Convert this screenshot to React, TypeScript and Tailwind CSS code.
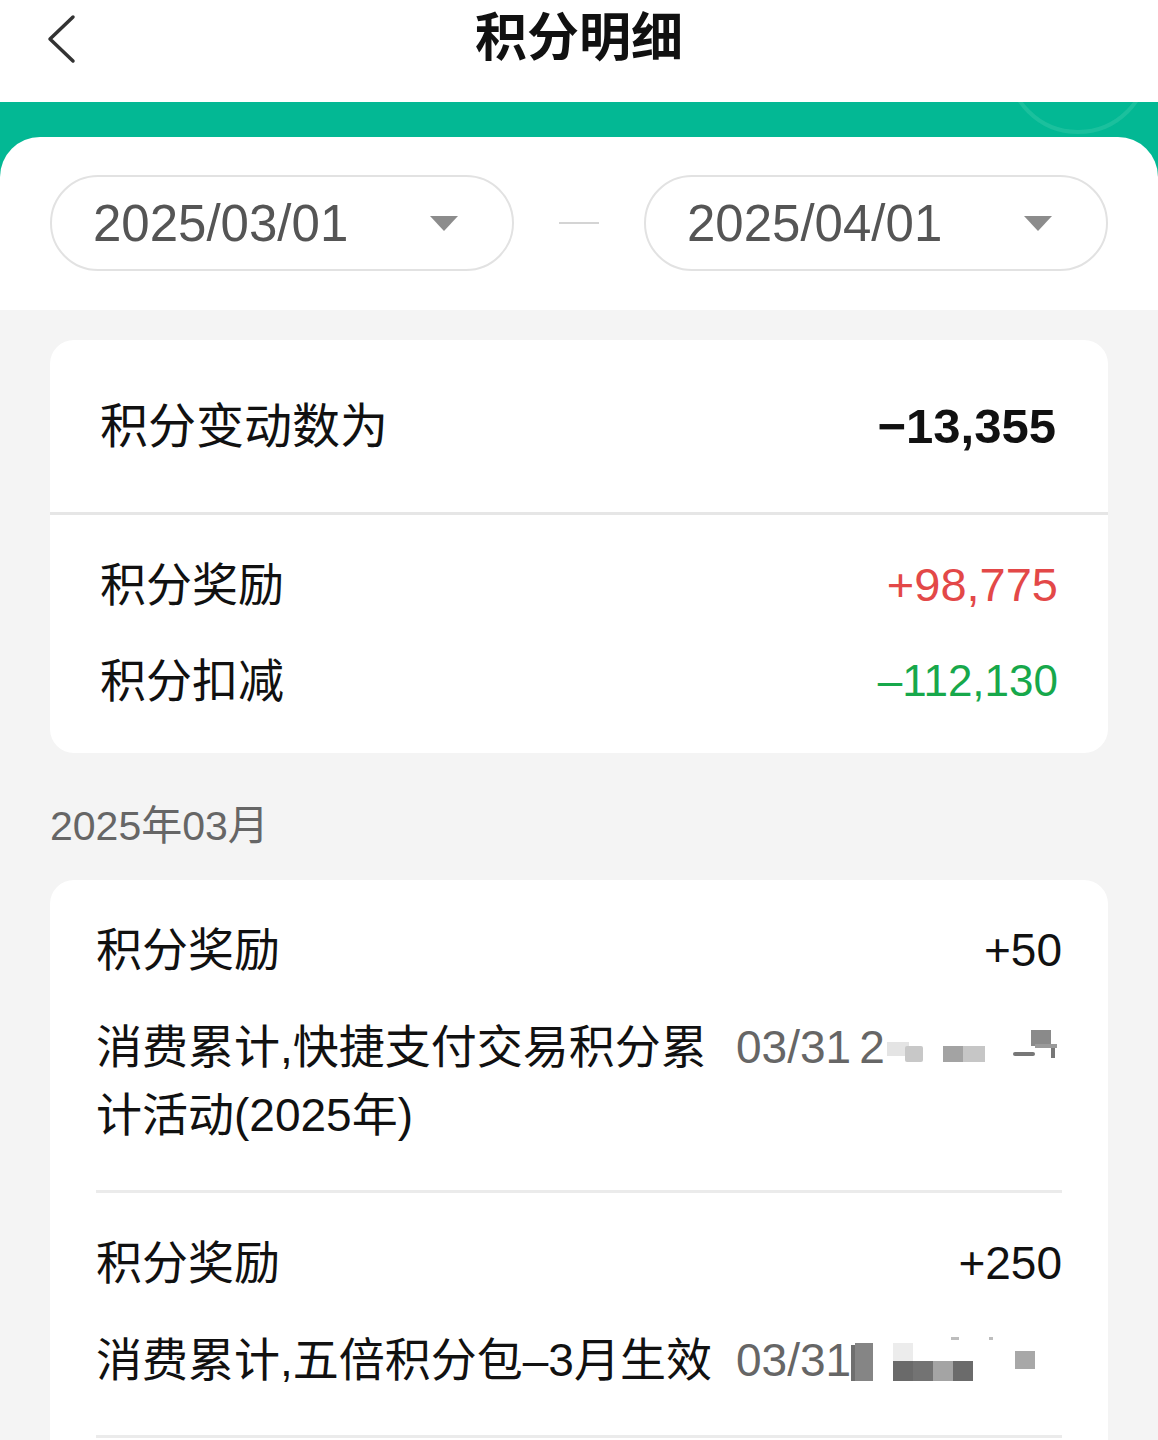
import React from "react";

const FONT = { fontFamily: '"Liberation Sans", "Noto Sans CJK SC", sans-serif' };

function Mosaic1() {
  return (
    <svg width="190" height="50" viewBox="0 0 190 50" className="shrink-0">
      <rect x="2" y="20" width="22" height="14" fill="#e4e4e4" />
      <rect x="20" y="24" width="18" height="16" fill="#c8c8c8" rx="2" />
      <rect x="58" y="24" width="20" height="16" fill="#a3a3a3" />
      <rect x="78" y="24" width="22" height="16" fill="#c6c6c6" />
      <rect x="128" y="30" width="22" height="4" fill="#777" rx="2" />
      <rect x="146" y="8" width="20" height="16" fill="#8a8a8a" />
      <rect x="150" y="22" width="22" height="4" fill="#9a9a9a" />
      <rect x="166" y="26" width="4" height="10" fill="#777" />
    </svg>
  );
}

function Mosaic2() {
  return (
    <svg width="210" height="50" viewBox="0 0 210 50" className="shrink-0">
      <rect x="0" y="10" width="4" height="36" fill="#6f6f6f" />
      <rect x="4" y="8" width="18" height="38" fill="#858585" />
      <rect x="42" y="8" width="20" height="18" fill="#ececec" />
      <rect x="42" y="26" width="20" height="20" fill="#6a6a6a" />
      <rect x="62" y="26" width="20" height="20" fill="#737373" />
      <rect x="82" y="26" width="20" height="20" fill="#a4a4a4" />
      <rect x="102" y="26" width="20" height="20" fill="#6b6b6b" />
      <rect x="100" y="2" width="8" height="3" fill="#bdbdbd" />
      <rect x="138" y="2" width="4" height="3" fill="#bdbdbd" />
      <rect x="164" y="16" width="20" height="18" fill="#a8a8a8" />
    </svg>
  );
}

function Caret() {
  return (
    <svg width="28" height="15" viewBox="0 0 28 15">
      <path d="M0 0 H28 L14 15 Z" fill="#8c8c8c" />
    </svg>
  );
}

function DatePill({ text }: { text: string }) {
  return (
    <div className="flex h-[96px] w-[464px] items-center justify-between rounded-full border-2 border-[#e2e2e2] pl-[41px] pr-[54px]">
      <span className="text-[51px] leading-none text-[#555555]">{text}</span>
      <Caret />
    </div>
  );
}

function DetailItem({
  title,
  amount,
  desc,
  mosaic,
}: {
  title: string;
  amount: string;
  desc: React.ReactNode;
  mosaic: React.ReactNode;
}) {
  return (
    <div className="border-b-[3px] border-[#ebebeb] pb-[41px] pt-[42px]">
      <div className="flex h-[56px] items-center justify-between">
        <span className="text-[46px] text-[#111111]">{title}</span>
        <span className="text-[46px] text-[#111111]">{amount}</span>
      </div>
      <div className="mt-[35px] flex items-start justify-between">
        <div className="min-w-0 flex-1 text-[46px] leading-[68px] text-[#111111]">{desc}</div>
        <div className="flex h-[68px] w-[326px] shrink-0 items-center overflow-hidden">
          <span className="whitespace-nowrap text-[46px] text-[#666666]">03/31</span>
          {mosaic}
        </div>
      </div>
    </div>
  );
}

export default function App() {
  return (
    <div className="relative h-[1440px] w-[1158px] overflow-hidden bg-[#f4f4f4]" style={FONT}>
      {/* Header */}
      <div className="relative flex h-[102px] items-center justify-center bg-white">
        <button className="absolute left-[44px] top-[14px] flex h-[50px] w-[36px] items-center">
          <svg width="34" height="50" viewBox="0 0 34 50">
            <path d="M29 3 L6 25 L29 47" fill="none" stroke="#333333" strokeWidth="3.5" strokeLinecap="round" strokeLinejoin="round" />
          </svg>
        </button>
        <h1 className="-mt-[26px] text-[52px] font-bold text-[#111111]">积分明细</h1>
      </div>

      {/* Green band + date filter */}
      <div className="relative bg-[#03b894] pt-[35px]">
        <svg className="absolute right-0 top-0" width="200" height="40" viewBox="0 0 200 40">
          <circle cx="120" cy="-40" r="70" fill="none" stroke="#2cc4a3" strokeWidth="4" opacity="0.6" />
        </svg>
        <div className="relative rounded-t-[40px] bg-white px-[50px] pb-[39px] pt-[38px]">
          <div className="flex items-center justify-between">
            <DatePill text="2025/03/01" />
            <div className="h-[2px] w-[40px] bg-[#d4d4d4]" />
            <DatePill text="2025/04/01" />
          </div>
        </div>
      </div>

      {/* Summary card */}
      <div className="px-[50px] pt-[30px]">
        <div className="rounded-[24px] bg-white">
          <div className="flex h-[172px] items-center justify-between pl-[50px] pr-[52px] pt-[2px]">
            <span className="text-[48px] text-[#111111]">积分变动数为</span>
            <span className="text-[49px] font-bold text-[#111111]">−13,355</span>
          </div>
          <div className="h-[3px] bg-[#e6e6e6]" />
          <div className="pb-[24px] pl-[50px] pr-[50px] pt-[22px]">
            <div className="flex h-[96px] items-center justify-between">
              <span className="text-[46px] text-[#111111]">积分奖励</span>
              <span className="text-[47px] text-[#e34848]">+98,775</span>
            </div>
            <div className="flex h-[96px] items-center justify-between">
              <span className="text-[46px] text-[#111111]">积分扣减</span>
              <span className="text-[44px] text-[#17a84b]">–112,130</span>
            </div>
          </div>
        </div>

        {/* Month label */}
        <div className="mb-[26px] mt-[45px] h-[56px] text-[41px] leading-[56px] text-[#666666]">2025年03月</div>

        {/* Detail card */}
        <div className="rounded-[24px] bg-white px-[46px] pb-[40px]">
          <DetailItem
            title="积分奖励"
            amount="+50"
            desc={
              <>
                消费累计,快捷支付交易积分累
                <br />
                计活动(2025年)
              </>
            }
            mosaic={
              <span className="ml-[8px] flex items-center">
                <span className="text-[46px] text-[#666666]">2</span>
                <Mosaic1 />
              </span>
            }
          />
          <DetailItem
            title="积分奖励"
            amount="+250"
            desc={<span className="whitespace-nowrap">消费累计,五倍积分包–3月生效</span>}
            mosaic={<Mosaic2 />}
          />
        </div>
      </div>
    </div>
  );
}
